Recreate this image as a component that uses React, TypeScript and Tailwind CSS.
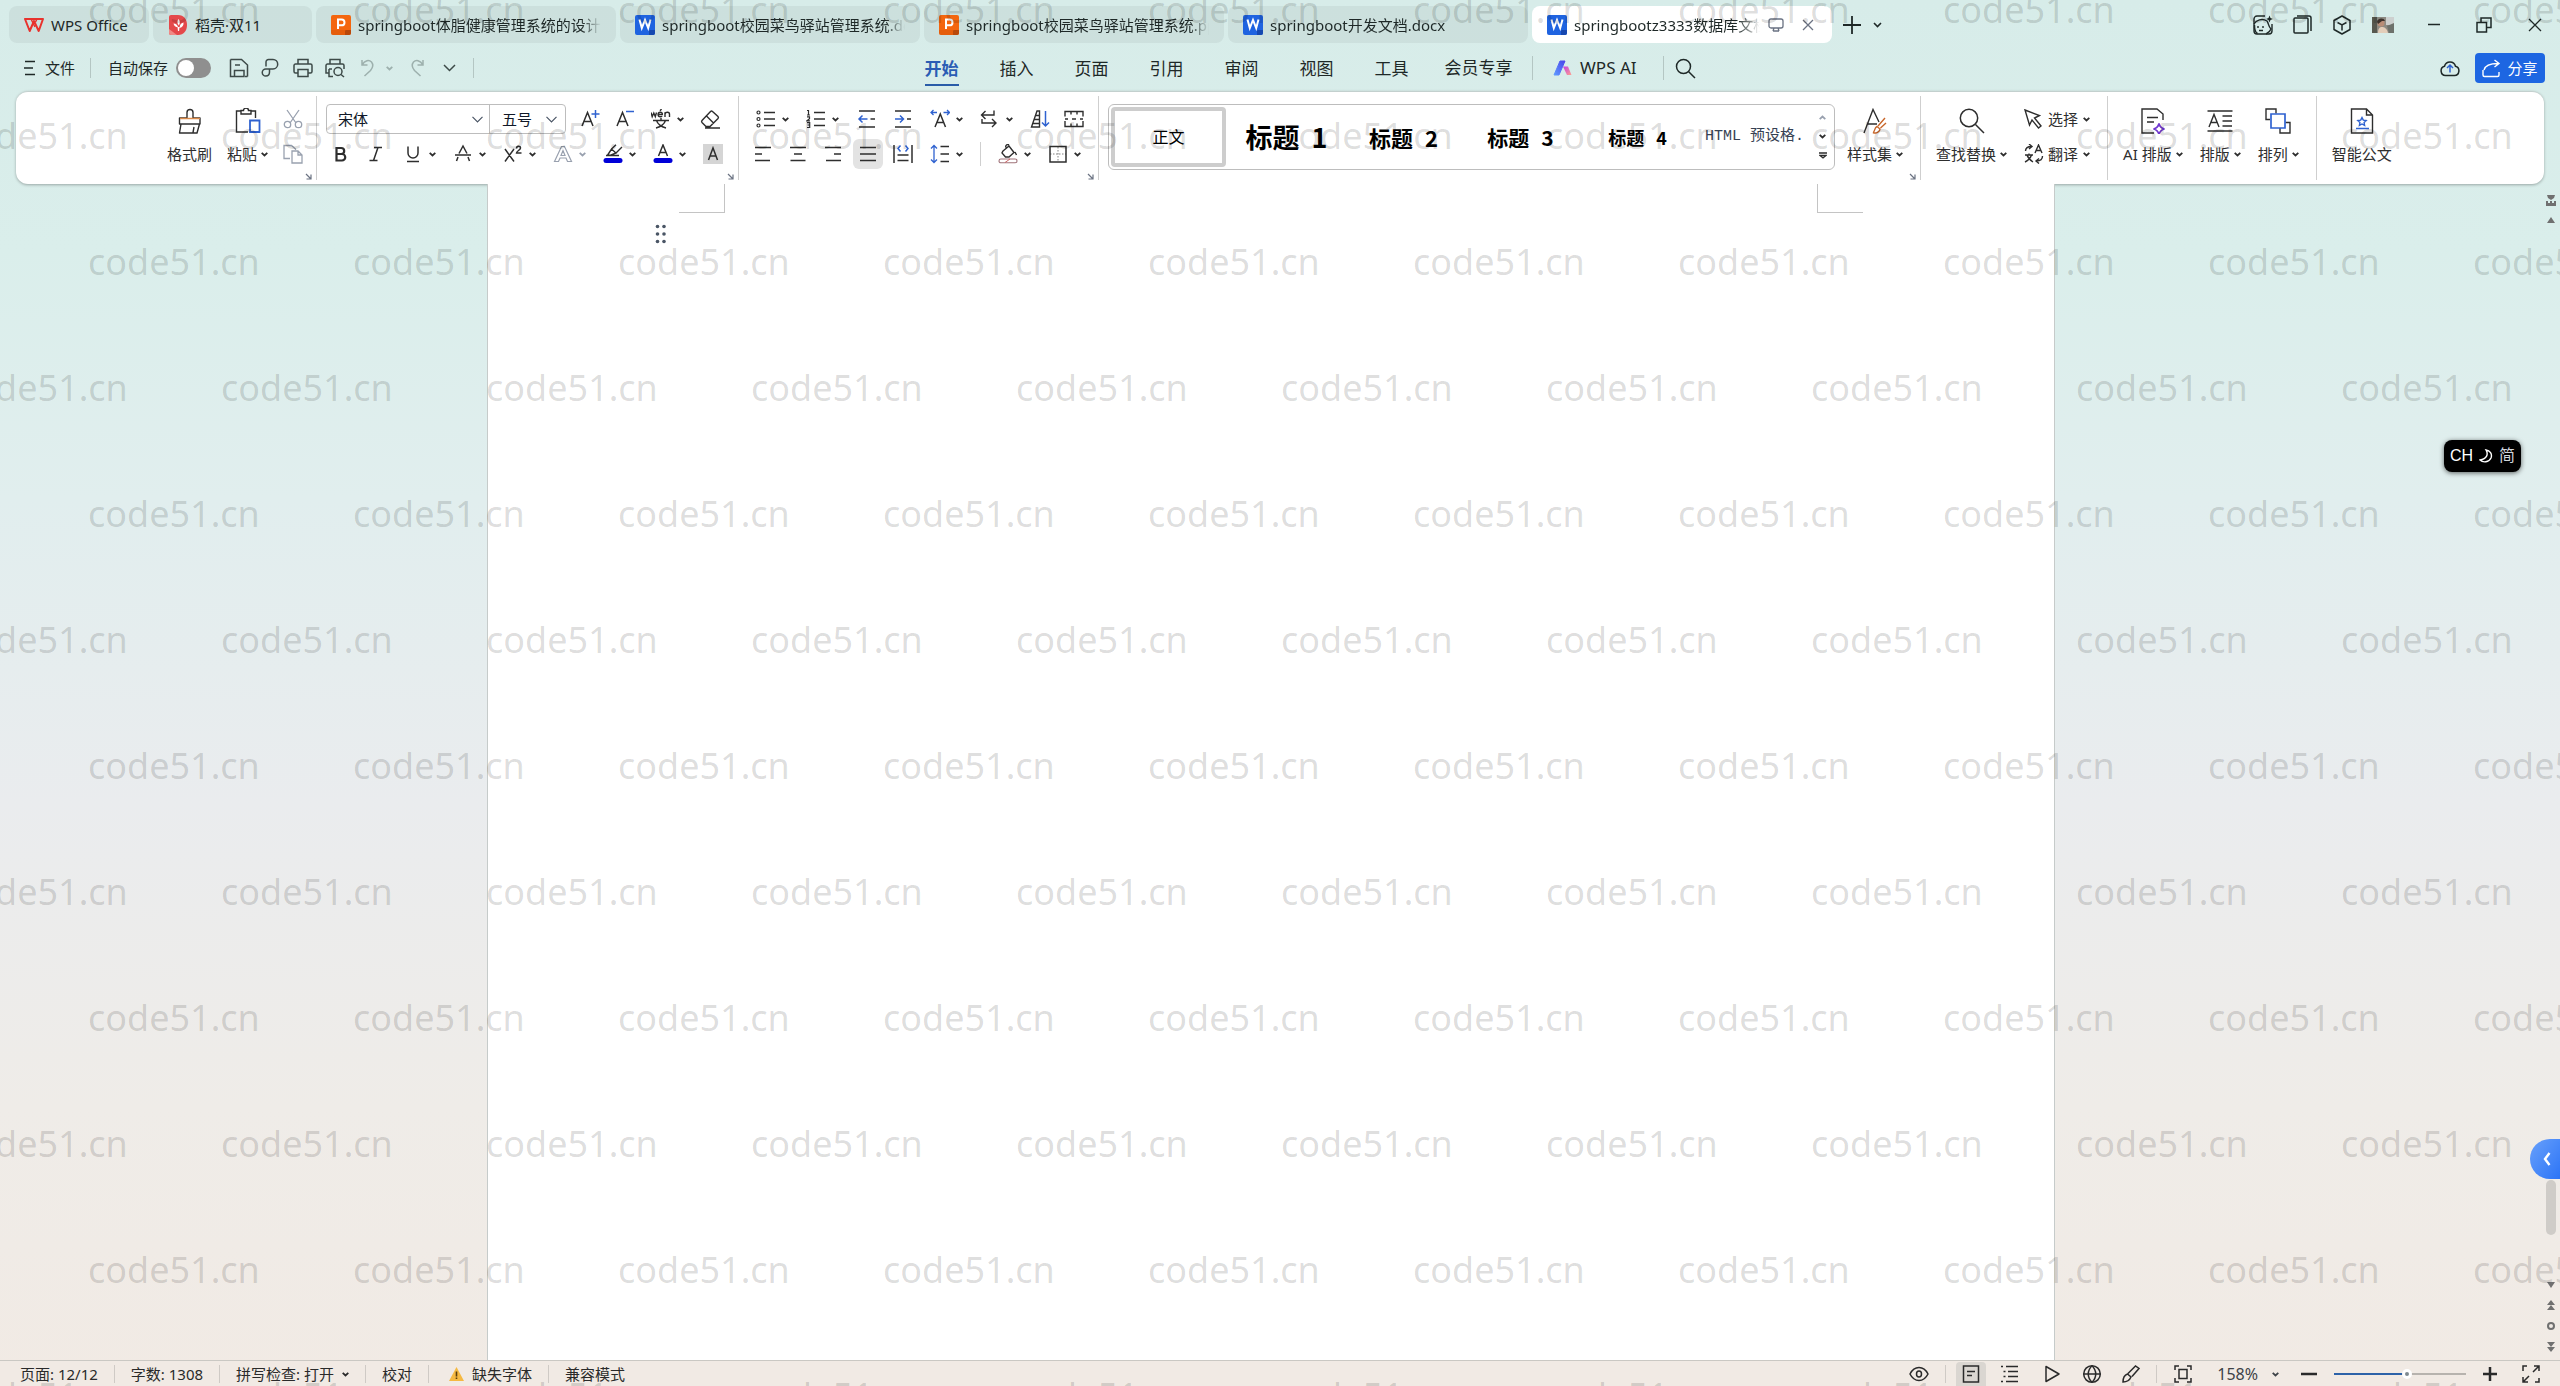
import { useState, type ReactNode } from 'react'

type IcoProps = { w?: number; h?: number; sw?: number; className?: string; children: ReactNode }

function Ico({ w = 20, h, sw = 1.5, className = '', children }: IcoProps) {
  const height = h ?? w
  return (
    <svg
      width={w}
      height={height}
      viewBox={`0 0 ${w} ${height}`}
      fill="none"
      stroke="currentColor"
      strokeWidth={sw}
      className={`shrink-0 ${className}`}
      aria-hidden="true"
    >
      {children}
    </svg>
  )
}

const BLUE = '#2f62d0'

function Chev({ className = '' }: { className?: string }) {
  return (
    <Ico w={7} h={5} sw={1.8} className={className}>
      <path d="M.7 .9l2.8 2.6L6.3 .9" />
    </Ico>
  )
}

function BigChev() {
  return (
    <Ico w={13} h={8} sw={1.5}>
      <path d="M1 1l5.5 5.5L12 1" />
    </Ico>
  )
}

function WordIcon() {
  return (
    <svg width="20" height="20" viewBox="0 0 20 20" className="shrink-0" aria-hidden="true">
      <rect width="20" height="20" rx="2" fill="#1f63e0" />
      <path d="M14 20v-4a1 1 0 011-1h5v3a2 2 0 01-2 2z" fill="#1648b0" />
      <path d="M4.5 4.5l2.3 8.5L10 5l3.2 8 2.3-8.5" fill="none" stroke="#fff" strokeWidth="2" />
    </svg>
  )
}

function SlidesIcon() {
  return (
    <svg width="20" height="20" viewBox="0 0 20 20" className="shrink-0" aria-hidden="true">
      <rect width="20" height="20" rx="2" fill="#f4660f" />
      <path d="M0 18v-3h14v5H2a2 2 0 01-2-2z" fill="#c94c05" opacity=".35" />
      <path d="M14 20v-4a1 1 0 011-1h5v3a2 2 0 01-2 2z" fill="#b8480a" />
      <path d="M7 14V4.5h3.6a2.9 2.9 0 010 5.8H7" fill="none" stroke="#fff" strokeWidth="2" />
    </svg>
  )
}

function WpsIcon() {
  return (
    <Ico w={20} sw={2} className="text-[#e8322d]">
      <path d="M1 4h18l-4.300 12L10 6 5.700 16z" strokeLinejoin="round" />
      <path d="M7 4l4 8M13 4l-1.500 3" strokeWidth="1.500" />
    </Ico>
  )
}

function DocerIcon() {
  return (
    <svg width="18" height="20" viewBox="0 0 18 20" className="shrink-0" aria-hidden="true">
      <path d="M0 2a2 2 0 012-2h7c6 0 9 4.500 9 10s-3 10-9 10H2a2 2 0 01-2-2z" fill="#e4484a" />
      <path d="M0 14l8 6H2a2 2 0 01-2-2z" fill="#f08a86" />
      <path d="M9.500 4c1.600 2 1.800 4 .4 6.500C8 8.500 8 6 9.500 4zM4.500 8.500c2.500 0 4 1.300 4.600 3.800-2.600-.2-4.200-1.400-4.600-3.800zM14.500 7.500c.3 2.800-1 4.800-3.800 5.500-.2-2.800 1-4.700 3.800-5.500zM8.500 12l2 0-.4 4H9z" fill="#fff" />
    </svg>
  )
}

const docTabs = [
  { name: 'springboot体脂健康管理系统的设计', kind: 'p' },
  { name: 'springboot校园菜鸟驿站管理系统.docx', kind: 'w' },
  { name: 'springboot校园菜鸟驿站管理系统.pptx', kind: 'p' },
  { name: 'springboot开发文档.docx', kind: 'w' },
]

const menus = ['开始', '插入', '页面', '引用', '审阅', '视图', '工具']

function TabBar() {
  return (
    <header className="flex h-[43px] items-end pl-[9px] pr-[18px]">
      <div className="flex min-w-0 gap-1">
        <button className="flex h-[37px] w-[140px] items-center gap-[7px] rounded-lg bg-black/5 pl-[15px]">
          <WpsIcon />
          WPS Office
        </button>
        <button className="flex h-[37px] w-[159px] items-center gap-2 rounded-lg bg-black/5 pl-4">
          <DocerIcon />
          稻壳·双11
        </button>
        {docTabs.map((tab) => (
          <button key={tab.name} className="flex h-[37px] w-[300px] min-w-0 items-center gap-[7px] rounded-lg bg-black/5 px-[15px]">
            {tab.kind === 'p' ? <SlidesIcon /> : <WordIcon />}
            <span className="flex-1 overflow-hidden whitespace-nowrap text-left [mask-image:linear-gradient(to_right,black_92%,transparent)]">
              {tab.name}
            </span>
          </button>
        ))}
        <div className="flex h-[37px] w-[300px] min-w-0 items-center rounded-lg bg-white pl-[15px] pr-[18px]">
          <button className="flex min-w-0 flex-1 items-center gap-[7px]">
            <WordIcon />
            <span className="flex-1 overflow-hidden whitespace-nowrap text-left [mask-image:linear-gradient(to_right,black_88%,transparent)]">
              springbootz3333数据库文档
            </span>
          </button>
          <Ico w={16} h={14} className="ml-2 text-gray-500" sw={1.3}>
            <path d="M3 1h10a2 2 0 012 2v5a2 2 0 01-2 2H3a2 2 0 01-2-2V3a2 2 0 012-2zM5 13h6M6 10l-1 3M10 10l1 3" />
          </Ico>
          <button aria-label="关闭标签" className="ml-[18px] text-gray-500">
            <Ico w={12} sw={1.3}>
              <path d="M1 1l10 10M11 1L1 11" />
            </Ico>
          </button>
        </div>
      </div>
      <div className="flex h-[37px] items-center gap-3 pl-[11px]">
        <button aria-label="新建">
          <Ico w={18} sw={1.8}>
            <path d="M9 0v18M0 9h18" />
          </Ico>
        </button>
        <button aria-label="标签列表">
          <Ico w={9} h={6} sw={1.6}>
            <path d="M1 1l3.500 3.500L8 1" />
          </Ico>
        </button>
      </div>
      <div className="ml-auto flex h-[37px] items-center">
        <button aria-label="助手">
          <Ico w={20} sw={1.4}>
            <path d="M12 1H4a3 3 0 00-3 3v12a3 3 0 003 3h12a3 3 0 003-3V9" />
            <path d="M1 9c2-4 8-6 13-3 2 3 1 5 4 8-1 3-3 4-5 5M1.500 10c0 4 0 7 3 8.500" />
            <path d="M5 11v2M10 11v2M6 15.500h4" />
            <path d="M16.500 .5l1 2.500 2.500 1-2.500 1-1 2.500-1-2.500-2.500-1 2.500-1z" fill="currentColor" stroke="none" />
          </Ico>
        </button>
        <button aria-label="窗口" className="ml-5">
          <Ico w={19}>
            <rect x="1" y="3" width="14" height="15" rx="1" />
            <path d="M4 1h12a2 2 0 012 2v13" />
          </Ico>
        </button>
        <button aria-label="应用" className="ml-5">
          <Ico w={20}>
            <path d="M10 1l8 4.500v9L10 19l-8-4.500v-9z" strokeLinejoin="round" />
            <path d="M5.500 7.500L10 10l4.500-2.500M10 10v5.500" />
          </Ico>
        </button>
        <button aria-label="账号" className="ml-5">
          <svg width="22" height="16" viewBox="0 0 22 16" aria-hidden="true">
            <rect width="22" height="16" fill="#8d8a82" />
            <rect x="14" width="8" height="8" fill="#cdd0cf" />
            <rect width="5" height="16" fill="#57584f" />
            <path d="M6 16c0-5 2-6 4-6s5 1 6 6z" fill="#e3cdb9" />
            <circle cx="9" cy="6" r="3.500" fill="#b98d77" />
            <path d="M5 5c0-4 7-5 8-1l-3 0-4 3z" fill="#3d322c" />
            <path d="M15 9l7-3v10h-5z" fill="#6d716b" />
          </svg>
        </button>
        <button aria-label="最小化" className="ml-[34px]">
          <Ico w={12}>
            <path d="M0 5.500h12" />
          </Ico>
        </button>
        <button aria-label="还原" className="ml-9">
          <Ico w={16}>
            <path d="M1 5.500h9.500V15H1zM5 5V1h10v9.500h-4" />
          </Ico>
        </button>
        <button aria-label="关闭" className="ml-9">
          <Ico w={14} sw={1.3}>
            <path d="M1 1l12 12M13 1L1 13" />
          </Ico>
        </button>
      </div>
    </header>
  )
}

function MenuBar() {
  const [active, setActive] = useState('开始')

  return (
    <div className="flex h-12 items-center pl-6 pr-[15px] pt-0.5">
      <button className="flex items-center gap-[9px]">
        <Ico w={12} h={16} sw={1.3}>
          <path d="M1 1.500h10M0 8h9M1 14.500h10" />
        </Ico>
        文件
      </button>
      <span className="ml-[15px] h-5 w-px bg-[#b4c6c3]" />
      <label className="ml-[17px] flex items-center gap-2">
        自动保存
        <input type="checkbox" className="peer sr-only" />
        <span className="flex h-5 w-[35px] items-center rounded-full bg-[#8f8f8f] p-0.5 peer-checked:justify-end">
          <span className="size-4 rounded-full bg-white" />
        </span>
      </label>
      <div className="ml-[18px] flex items-center gap-3 text-[#3d4a48]">
        <button aria-label="保存">
          <Ico>
            <path d="M1.500 1.500h11l6 5.500v11.500M18.500 18.500H16M5 18.500H1.500v-17M6 7h5M5.500 18.500v-6h9.500v6z" />
          </Ico>
        </button>
        <button aria-label="输出PDF">
          <Ico>
            <path d="M5 8.500V4a2.500 2.500 0 012.500-2.500H12a4.700 4.700 0 010 9.400H4.800a3.500 3.500 0 000 7.100c2.400 0 3.700-1.500 3.700-4V10.900" />
          </Ico>
        </button>
        <button aria-label="打印">
          <Ico>
            <path d="M5 6V1.500h10V6M5 15H2.500A1.500 1.500 0 011 13.500v-6A1.500 1.500 0 012.500 6h15A1.500 1.500 0 0119 7.500v6a1.500 1.500 0 01-1.500 1.500H15M5 11.500h10v7H5z" />
          </Ico>
        </button>
        <button aria-label="打印预览">
          <Ico>
            <path d="M5 6V1.500h10V6M4 15H1V7.500A1.500 1.500 0 012.500 6h15A1.500 1.500 0 0119 7.500V11M4 11v7.500h4M4 11h3" />
            <circle cx="13" cy="13.500" r="4" />
            <path d="M16 16.500l3 2.500" />
          </Ico>
        </button>
        <div className="flex items-center gap-[7px] pl-0.5 text-[#9db0ad]">
          <button aria-label="撤销">
            <Ico>
              <path d="M3 2v5h5.500M3 7c3-5 7-5.500 9.500-3 2.500 3 1 6-1 8.500L5.500 18" />
            </Ico>
          </button>
          <Chev />
        </div>
        <button aria-label="恢复" className="pl-0.5 text-[#9db0ad]">
          <Ico>
            <path d="M16 2v5h-5.500M16 7C13 2 9 1.500 6.500 4 4 7 5.500 10 7.500 12.500l6 5.500" />
          </Ico>
        </button>
        <button aria-label="更多" className="pl-1">
          <BigChev />
        </button>
      </div>
      <span className="ml-[17px] h-5 w-px bg-[#b4c6c3]" />
      <nav className="ml-[430px] flex text-[17px]">
        {menus.map((m) => (
          <button key={m} onClick={() => setActive(m)} className="flex w-[75px] justify-center">
            <span
              className={
                m === active
                  ? 'border-b-2 border-[#2a5ca8] pt-0.5 font-bold leading-[31px] text-[#2a5cb4]'
                  : 'pt-0.5 leading-[31px]'
              }
            >
              {m}
            </span>
          </button>
        ))}
        <button className="w-[99px]">会员专享</button>
      </nav>
      <span className="ml-1 h-6 w-px bg-[#b4c6c3]" />
      <button className="ml-5 flex items-center gap-2 text-[17px]">
        <svg width="19" height="16" viewBox="0 0 19 16" aria-hidden="true">
          <defs>
            <linearGradient id="aiBlue" x1="0" y1="1" x2="1" y2="0">
              <stop offset="0" stopColor="#5f9bff" />
              <stop offset="1" stopColor="#4a43ea" />
            </linearGradient>
            <linearGradient id="aiPink" x1="0" y1="0" x2="1" y2="1">
              <stop offset="0" stopColor="#c63fe0" />
              <stop offset="1" stopColor="#ffa18f" />
            </linearGradient>
          </defs>
          <path d="M7 1h5L6 15H1z" fill="url(#aiBlue)" stroke="url(#aiBlue)" strokeLinejoin="round" />
          <path d="M10 6.500h5L18.500 15H14z" fill="url(#aiPink)" />
        </svg>
        WPS AI
      </button>
      <span className="ml-[26px] h-6 w-px bg-[#b4c6c3]" />
      <button aria-label="搜索" className="ml-[11px]">
        <Ico w={21}>
          <circle cx="8.500" cy="8.500" r="7" />
          <path d="M13.500 13.500l6.500 6.500" />
        </Ico>
      </button>
      <button aria-label="上传" className="ml-auto">
        <Ico w={20} h={18}>
          <path d="M5.500 16.500a4.700 4.700 0 01-1-9.200 5.700 5.700 0 0111 0 4.700 4.700 0 01-1 9.200z" />
          <path d="M10 13.500v-7M7 9l3-3 3 3" stroke={BLUE} />
        </Ico>
      </button>
      <button className="ml-[15px] flex h-[30px] w-[70px] items-center justify-center gap-[6px] rounded bg-[#1d66e2] text-white">
        <Ico w={19} sw={1.4}>
          <path d="M1 11v5a1.500 1.500 0 001.500 1.500h13A1.500 1.500 0 0017 16v-3M2 11c1-4 5-6.500 14-6.500M12.500 1L17 4.500 12.500 8" />
        </Ico>
        分享
      </button>
    </div>
  )
}

function Tool({ label, chev, active, dim, children }: { label: string; chev?: boolean; active?: boolean; dim?: boolean; children: ReactNode }) {
  return (
    <button aria-label={label} className={`flex h-[30px] items-center gap-[6px] ${dim ? 'text-gray-400' : ''}`}>
      {active ? <span className="-mx-[5px] rounded-md bg-[#e3e3e3] p-[5px]">{children}</span> : children}
      {chev && <Chev />}
    </button>
  )
}

function BigTool({ label, chev, children }: { label: string; chev?: boolean; children: ReactNode }) {
  return (
    <button className="flex h-[60px] flex-col items-center justify-between pt-1">
      {children}
      <span className="flex items-center gap-1 whitespace-nowrap leading-5">
        {label}
        {chev && <Chev />}
      </span>
    </button>
  )
}

function Group({ className = '', launcher, children }: { className?: string; launcher?: boolean; children: ReactNode }) {
  return (
    <div className={`relative my-1 flex shrink-0 border-r border-[#cfcfcf] pt-2 ${className}`}>
      {children}
      {launcher && (
        <button aria-label="更多设置" className="absolute bottom-0 right-1 text-gray-500">
          <Ico w={7} sw={1.2}>
            <path d="M1 1l5 5M6 1.500V6H1.500" />
          </Ico>
        </button>
      )}
    </div>
  )
}

function ClipboardGroup() {
  return (
    <Group launcher className="gap-[15px] pl-[151px] pr-[13px]">
      <BigTool label="格式刷">
        <Ico w={26} sw={1.4}>
          <path d="M10 10V4.500a3 3 0 016 0V10h7v6H2.500v-6zM4 16L2.500 25H20l2.500-9M17 19l-1 5.500" strokeLinejoin="round" />
          <path d="M3 10.500h20" stroke="#d98a4b" />
        </Ico>
      </BigTool>
      <BigTool label="粘贴" chev>
        <Ico w={26} sw={1.4}>
          <path d="M6 3H1.500v21H13M16 3h4.500v7M6 6V2.500h2.500a2.500 2.500 0 015 0H16V6z" />
          <path d="M15 12.500h9.500V24H15z" stroke={BLUE} strokeWidth="1.800" />
        </Ico>
      </BigTool>
      <div className="flex flex-col gap-[5px] text-gray-400">
        <Tool label="剪切">
          <Ico sw={1.3}>
            <path d="M4 1l9 13M16 1L7 14" />
            <circle cx="4.500" cy="15.500" r="3.200" />
            <circle cx="15.500" cy="15.500" r="3.200" />
          </Ico>
        </Tool>
        <Tool label="复制">
          <Ico sw={1.3}>
            <path d="M7 14.500H1v-13h7.500l4 3.500v1M9 7h6l4 4v8H9zM15 7v4h4" />
          </Ico>
        </Tool>
      </div>
    </Group>
  )
}

function FontGroup() {
  return (
    <Group launcher className="w-[422px] flex-col gap-[5px] pl-[9px]">
      <div className="flex h-[30px] items-center gap-[15px]">
        <div className="flex h-[30px] w-[240px] rounded border border-[#bdbdbd] text-gray-600">
          <div className="flex w-[163px] items-center border-r border-[#bdbdbd] pr-1.5">
            <select aria-label="字体" className="h-full min-w-0 flex-1 appearance-none bg-transparent pl-[11px] text-gray-900 outline-none">
              <option>宋体</option>
              <option>黑体</option>
            </select>
            <Ico w={11} h={7} sw={1.2}>
              <path d="M.5 .8l5 5 5-5" />
            </Ico>
          </div>
          <div className="flex flex-1 items-center pr-2">
            <select aria-label="字号" className="h-full min-w-0 flex-1 appearance-none bg-transparent pl-3 text-gray-900 outline-none">
              <option>五号</option>
              <option>四号</option>
            </select>
            <Ico w={11} h={7} sw={1.2}>
              <path d="M.5 .8l5 5 5-5" />
            </Ico>
          </div>
        </div>
        <Tool label="增大字号">
          <Ico>
            <path d="M1 17L6.500 3.500 12 17M3 12.500h7" />
            <path d="M14.500 1v8M10.500 5h8" stroke={BLUE} />
          </Ico>
        </Tool>
        <Tool label="减小字号">
          <Ico>
            <path d="M1 17L6.500 3.500 12 17M3 12.500h7" />
            <path d="M10 2.500h8" stroke={BLUE} />
          </Ico>
        </Tool>
        <Tool label="拼音指南" chev>
          <Ico sw={1.4}>
            <path d="M0 3.500l1.200 4.200L2.800 4l1.500 3.700 1.200-4.200M7 5.500h4.300C11.500 4 10.500 3.300 9.300 3.300c-3 0-3 4.500 0 4.500.8 0 1.400-.2 1.900-.6M9 1.800L10.500 0M14 8V3.300M14 5c.5-2.300 4.500-2.300 4.500.3V8" />
            <path d="M2 11.500h16M10 9v2.500M5.500 11.500c1 3 4 6 9.500 7.500M14.500 11.500c-1 3-4 6-9.500 7.500" />
          </Ico>
        </Tool>
        <Tool label="清除格式">
          <Ico w={22} h={20} sw={1.4}>
            <path d="M3 11.500l8.500-9a1.500 1.500 0 012 0l5.500 5a1.500 1.500 0 010 2L11 17.500H7L3 13.500a1.500 1.500 0 010-2zM7.500 7l7 7M6 19h15" />
          </Ico>
        </Tool>
      </div>
      <div className="flex items-center gap-[17px] pl-[3px]">
        <Tool label="加粗">
          <Ico sw={2.2}>
            <path d="M7.500 4h4.700a3 3 0 010 6H7.500zM7.500 10H13a3.200 3.200 0 010 6.500H7.500z" />
          </Ico>
        </Tool>
        <Tool label="倾斜">
          <Ico>
            <path d="M8 3.500h8M3.500 16.500h8M12 3.500l-4.500 13" />
          </Ico>
        </Tool>
        <Tool label="下划线" chev>
          <Ico>
            <path d="M5 2.500v6.500a5 5 0 0010 0V2.500M4 17.500h12" />
          </Ico>
        </Tool>
        <Tool label="删除线" chev>
          <Ico>
            <path d="M6 9.500l4-7.500 4 7.500M2 11h16M5 13l-1.500 4M15 13l1.500 4" />
          </Ico>
        </Tool>
        <Tool label="上标" chev>
          <Ico>
            <path d="M2 5l9 12.500M11 5L2 17.500M13.500 4.500c0-3 4-3 4-.5 0 2-4 3-4 5h5" />
          </Ico>
        </Tool>
        <Tool label="文字效果" chev dim>
          <Ico sw={1.2}>
            <path d="M1.500 17.500L8.500 2.500h3l7 15h-4l-1.500-3.500H7l-1.500 3.500zM8 11.500h4L10 6.500z" />
          </Ico>
        </Tool>
        <Tool label="突出显示" chev>
          <Ico>
            <path d="M3 11.500h13M5 10.500L8.500 5l4.500 4-6 2.500zM8.500 5L13 .8M13 9l6-6" strokeWidth="1.400" />
            <rect x=".5" y="14" width="19" height="5" rx="2.500" fill="#0000d8" stroke="none" />
          </Ico>
        </Tool>
        <Tool label="字体颜色" chev>
          <Ico>
            <path d="M5.500 12L10 1l4.500 11M7 8.500h6" />
            <rect x=".5" y="14" width="19" height="5" rx="2.500" fill="#0000d8" stroke="none" />
          </Ico>
        </Tool>
        <Tool label="字符底纹">
          <Ico>
            <rect width="20" height="20" fill="#d5d5d5" stroke="none" />
            <path d="M5.500 16L10 4l4.500 12M7 12h6" />
          </Ico>
        </Tool>
      </div>
    </Group>
  )
}

function ParagraphGroup() {
  return (
    <Group launcher className="w-[360px] flex-col gap-[5px] pl-[14px]">
      <div className="flex items-center gap-[17px] pl-[3px]">
        <Tool label="项目符号" chev>
          <Ico>
            <path d="M8 3.500h11M8 10h11M8 16.500h11" />
            <circle cx="2.500" cy="3.500" r="1.500" strokeWidth="1.200" />
            <circle cx="2.500" cy="10" r="1.500" strokeWidth="1.200" />
            <circle cx="2.500" cy="16.500" r="1.500" strokeWidth="1.200" />
          </Ico>
        </Tool>
        <Tool label="编号" chev>
          <Ico>
            <path d="M8 3.500h11M8 10h11M8 16.500h11" />
            <path d="M1 1.500h1.500V6M1 6h3M1 7.800h2.500v2L1 11.800h3M1 13.700h2.700v4.800H1M1.500 16h2" strokeWidth="1.200" />
          </Ico>
        </Tool>
        <Tool label="减少缩进">
          <Ico>
            <path d="M3 2h16M3 18h16M14.500 10H19" />
            <path d="M3 10h8.500M6.500 6.500L3 10l3.500 3.500" stroke={BLUE} />
          </Ico>
        </Tool>
        <Tool label="增加缩进">
          <Ico>
            <path d="M2 2h16M2 18h16M14 10h4" />
            <path d="M2 10h8.500M7 6.500l3.500 3.500L7 13.500" stroke={BLUE} />
          </Ico>
        </Tool>
        <Tool label="中文版式" chev>
          <Ico>
            <path d="M5 18L10.300 5 15.500 18M7 13.500h6.500" />
            <path d="M1 3.500h6M3.500 1L1 3.500 3.500 6M13.500 3.500h6M17 1l2.500 2.500L17 6" stroke={BLUE} strokeWidth="1.300" />
          </Ico>
        </Tool>
        <Tool label="换行" chev>
          <Ico>
            <path d="M14 1.500v4.500H2M5.500 2L1.500 6l4 4M2 10v4h14M12 10l4 4-4 4" strokeWidth="1.400" />
          </Ico>
        </Tool>
        <Tool label="排序">
          <Ico>
            <path d="M9.500 18V2H7L1.500 18zM5.500 6.500h4M4 10.500h5.500M2.500 14.500h7" strokeWidth="1.400" />
            <path d="M15.500 2v15M12 13.500l3.500 3.500 3.500-3.500" stroke={BLUE} />
          </Ico>
        </Tool>
        <button aria-label="显示标记" className="-ml-[3px] flex h-[30px] items-center">
          <Ico sw={1.4}>
            <path d="M1 7.500V2.500h18v5M1 12v5.500h18V12M7 2.500V5.500M13 2.500V5.500M7 17.500v-3M13 17.500v-3" />
            <path d="M1 10h3M8 10h4M16 10h3" />
          </Ico>
        </button>
      </div>
      <div className="flex items-center gap-[17px]">
        <div className="flex gap-[15px]">
          <Tool label="左对齐">
            <Ico>
              <path d="M2 3.500h16M2 10h7M2 16.500h15" />
            </Ico>
          </Tool>
          <Tool label="居中">
            <Ico>
              <path d="M2 3.500h16M6 10h8M2.500 16.500h15" />
            </Ico>
          </Tool>
          <Tool label="右对齐">
            <Ico>
              <path d="M2 3.500h16M11 10h7M3 16.500h15" />
            </Ico>
          </Tool>
          <Tool label="两端对齐" active>
            <Ico>
              <path d="M2 3.500h16M2 10h16M2 16.500h16" />
            </Ico>
          </Tool>
          <Tool label="分散对齐">
            <Ico>
              <path d="M1 1v18M19 1v18M4.500 11h11M4.500 16.500h11" />
              <path d="M7.500 1.500L5 4.500l2.500 3M12.500 1.500L15 4.500l-2.500 3" stroke={BLUE} />
            </Ico>
          </Tool>
        </div>
        <Tool label="行距" chev>
          <Ico>
            <path d="M10.500 2.500H19M10.500 10H19M10.500 17.500H19" />
            <path d="M4 2v16M1 4.500l3-3 3 3M1 15.500l3 3 3-3" stroke={BLUE} strokeWidth="1.300" />
          </Ico>
        </Tool>
        <span className="h-6 w-px bg-[#cfcfcf]" />
        <Tool label="底纹颜色" chev>
          <Ico sw={1.4}>
            <path d="M5 7l6-5 5 6.500-5 4.500H7.500L4 9zM8 3.500A2 2 0 0111 1M17 8l1.500 3" />
            <rect x="1" y="15" width="18" height="3.800" rx="1.900" stroke="#a0737a" strokeWidth="1.100" />
            <path d="M7 18.500l5-3.500" stroke="#cc6666" strokeWidth="1" />
          </Ico>
        </Tool>
        <Tool label="边框" chev>
          <Ico>
            <rect x="2" y="2.500" width="16" height="15.500" />
            <path d="M10 3v15M2 10h16" strokeWidth="1" strokeDasharray="1.500 1.500" opacity=".6" />
          </Ico>
        </Tool>
      </div>
    </Group>
  )
}

const styleCell = 'flex w-[117px] items-center justify-center whitespace-pre text-black'

function StyleName({ name, num }: { name: string; num: string }) {
  return (
    <span className="flex gap-3 font-['Noto_Sans_CJK_SC',sans-serif] font-bold leading-8">
      <span>{name}</span>
      <span>{num}</span>
    </span>
  )
}

function StylesGroup() {
  return (
    <Group launcher className="gap-3 pl-[9px] pr-[17px]">
      <div className="flex h-[66px] rounded-md border border-[#bdbdbd] p-0.5">
        <button className="mr-0.5 w-[115px] rounded border-4 border-[#cdcdcd] text-base text-black">正文</button>
        <button className={`${styleCell} text-[27px]`}>
          <StyleName name="标题" num="1" />
        </button>
        <button className={`${styleCell} text-[22px]`}>
          <StyleName name="标题" num="2" />
        </button>
        <button className={`${styleCell} text-[21px]`}>
          <StyleName name="标题" num="3" />
        </button>
        <button className={`${styleCell} text-[18px]`}>
          <StyleName name="标题" num="4" />
        </button>
        <button className={`${styleCell} font-['Liberation_Mono','Noto_Sans_CJK_SC',monospace] text-[15px] text-gray-700`}>
          HTML 预设格.
        </button>
        <div className="flex w-[19px] flex-col items-center justify-between py-2">
          <button aria-label="上一行" className="text-gray-400">
            <Chev className="rotate-180" />
          </button>
          <button aria-label="下一行">
            <Chev />
          </button>
          <button aria-label="展开样式">
            <Ico w={8} h={7} sw={1.3}>
              <path d="M0 1h8M1 3.500h6L4 6z" />
            </Ico>
          </button>
        </div>
      </div>
      <BigTool label="样式集" chev>
        <Ico w={26} sw={1.4}>
          <path d="M2 25L11 1.500 17 14M5 16h10" />
          <path d="M11 24.500c2 0 1-5 4-6l3 2.500c0 3-4 5-7 3.500zM16 18l7-8M18.500 20l5.500-5" stroke="#c8662a" />
        </Ico>
      </BigTool>
    </Group>
  )
}

function Ribbon() {
  return (
    <section className="mx-4 flex h-[93px] overflow-hidden rounded-xl border-t border-[#c3d0ce] bg-white text-[#2e2e2e] shadow-[0_1px_3px_rgba(0,0,0,0.3)]">
      <ClipboardGroup />
      <FontGroup />
      <ParagraphGroup />
      <StylesGroup />
      <Group className="gap-[17px] pl-[15px] pr-[17px]">
        <BigTool label="查找替换" chev>
          <Ico w={26}>
            <circle cx="10" cy="10" r="8.700" />
            <path d="M16.500 16.500l8.500 8.500" />
          </Ico>
        </BigTool>
        <div className="flex flex-col gap-[5px]">
          <button className="flex h-[30px] items-center gap-1">
            <Ico sw={1.4}>
              <path d="M1 1l14.500 5.500-5 2.500 6.500 8-2.500 2-6.500-8-2.500 5z" />
            </Ico>
            选择
            <Chev className="ml-px" />
          </button>
          <button className="flex h-[30px] items-center gap-1">
            <Ico sw={1.4}>
              <path d="M1.500 7c0-3 2-4.500 6-4.500M5 0l3 2.500L5 5M11 9l3.500-8L18 9M12 6.500h5M18.500 12c0 3-2 5-6 5M15 14.500L12 17l3 2.500" />
              <path d="M1 11h8M5 9.500V11M3 11c1 3 3 5 6 7M7.500 11c-1 3-3.500 5.500-6.500 7" />
            </Ico>
            翻译
            <Chev className="ml-px" />
          </button>
        </div>
      </Group>
      <Group className="gap-[17px] pl-[15px] pr-[17px]">
        <BigTool label="AI 排版" chev>
          <Ico w={26} sw={1.4}>
            <path d="M14 25H2V1h15l6 5v6M7 9.500h11M7 14h7" />
            <path d="M19 15.500c.8 3.500 2 4.700 5.500 5.500-3.500.8-4.700 2-5.500 5.500-.8-3.500-2-4.700-5.500-5.500 3.500-.8 4.700-2 5.500-5.500z" stroke="#7038d0" strokeWidth="1.700" />
          </Ico>
        </BigTool>
        <BigTool label="排版" chev>
          <Ico w={26} sw={1.4}>
            <path d="M.5 3h25M.5 23h25M15.500 8H25M15.500 13H25M15.500 18H25M2 19L7 6.500 12 19M4 14.500h6.500" />
          </Ico>
        </BigTool>
        <BigTool label="排列" chev>
          <Ico w={26} sw={1.4}>
            <path d="M5 11.500H1V1h10v4.500M20.500 14.500H25V25H15v-5" />
            <path d="M6 6h14v14H6z" stroke={BLUE} strokeWidth="1.700" />
          </Ico>
        </BigTool>
      </Group>
      <div className="flex shrink-0 pl-[15px] pt-3">
        <BigTool label="智能公文">
          <Ico w={26} sw={1.4}>
            <path d="M2.500 1h15l6 6v18h-21zM17.500 1v6h6" />
            <path d="M13 9.500l1.300 2.600 2.900.4-2.100 2 .5 2.900-2.600-1.400-2.600 1.400.5-2.900-2.100-2 2.900-.4zM7 20.500h13" stroke={BLUE} />
          </Ico>
        </BigTool>
      </div>
    </section>
  )
}

function ScrollColumn() {
  return (
    <div className="flex w-[18px] flex-col items-center pb-2 pt-[11px] text-[#707070]">
      <svg width="10" height="11" viewBox="0 0 10 11" fill="currentColor" aria-hidden="true">
        <path d="M1 0h8L8 3 5 5 2 3zM0 6h2v2h2V6h2v2h2V6h2v5H0z" />
      </svg>
      <svg width="8" height="6" viewBox="0 0 8 6" fill="currentColor" className="mt-[11px]" aria-hidden="true">
        <path d="M4 0l4 6H0z" />
      </svg>
      <span className="mb-[47px] mt-auto h-[55px] w-[10px] rounded-full bg-[#cfccc8]" />
      <div className="flex flex-col items-center gap-3">
        <svg width="8" height="6" viewBox="0 0 8 6" fill="currentColor" aria-hidden="true">
          <path d="M4 6l4-6H0z" />
        </svg>
        <svg width="8" height="10" viewBox="0 0 8 10" fill="currentColor" aria-hidden="true">
          <path d="M4 0l4 5H0zM4 5l4 5H0z" />
        </svg>
        <span className="h-2 w-2 rounded-sm border-2 border-[#707070]" />
        <svg width="8" height="10" viewBox="0 0 8 10" fill="currentColor" aria-hidden="true">
          <path d="M4 5l4-5H0zM4 10l4-5H0z" />
        </svg>
      </div>
    </div>
  )
}

function DocumentArea() {
  return (
    <main className="relative flex min-h-0 flex-1">
      <div className="flex flex-1 justify-center overflow-hidden">
        <article className="w-[1568px] border-x border-[#c6cbca] bg-white">
          <div className="flex h-[29px] justify-between px-[191px]">
            <span className="w-[46px] border-b border-r border-[#c4c4c4]" />
            <span className="w-[46px] border-b border-l border-[#c4c4c4]" />
          </div>
          <button aria-label="拖动段落" className="ml-[167px] mt-[11px] block text-gray-600">
            <svg width="12" height="20" viewBox="0 0 12 20" fill="currentColor" aria-hidden="true">
              <circle cx="2.500" cy="2.500" r="1.800" />
              <circle cx="9" cy="2.500" r="1.800" />
              <circle cx="2.500" cy="10" r="1.800" />
              <circle cx="9" cy="10" r="1.800" />
              <circle cx="2.500" cy="17.500" r="1.800" />
              <circle cx="9" cy="17.500" r="1.800" />
            </svg>
          </button>
        </article>
      </div>
      <ScrollColumn />
      <div className="absolute right-[39px] top-64 flex h-8 w-[77px] items-center justify-center gap-1.5 rounded-lg bg-black font-['Liberation_Sans','Noto_Sans_CJK_SC',sans-serif] text-base text-white shadow-[0_1px_5px_rgba(0,0,0,0.6)]">
        CH
        <Ico w={14} sw={1.4}>
          <path d="M7 1c2.500 4 1 9-6 10 3 3 9 2.500 11-2C13.500 5 11 1.500 7 1z" />
        </Ico>
        <span className="text-gray-300">简</span>
      </div>
      <button
        aria-label="展开侧栏"
        className="absolute bottom-[181px] right-0 flex h-10 w-[30px] items-center justify-center rounded-l-full bg-linear-to-br from-[#68a0fb] to-[#2c74f6] pl-1 text-white"
      >
        <Ico w={8} h={14} sw={2.4}>
          <path d="M6.500 1L2 7l4.500 6" />
        </Ico>
      </button>
    </main>
  )
}

function StatusBar() {
  const [zoom, setZoom] = useState(56)
  const sep = <span className="block h-[18px] w-px bg-[#cfcac5]" />

  return (
    <footer className="flex h-[26px] items-center border-t border-[#cac8c3] bg-[#f1eae4] px-5 pt-px text-[#2a2a2a]">
      <div className="flex items-center gap-4">
        <button>页面: 12/12</button>
        {sep}
        <button>字数: 1308</button>
        {sep}
        <button className="flex items-center gap-2">
          拼写检查: 打开 <Chev />
        </button>
        {sep}
        <button>校对</button>
        {sep}
        <button className="flex items-center gap-2 pl-1">
          <svg width="15" height="14" viewBox="0 0 15 14" aria-hidden="true">
            <path d="M7.500 0L15 14H0z" fill="#f5b942" />
            <path d="M6.700 4.500h1.600v5H6.700zM6.700 10.500h1.600V12H6.700z" fill="#5b3d0a" />
          </svg>
          缺失字体
        </button>
        {sep}
        <button>兼容模式</button>
      </div>
      <div className="ml-auto flex items-center">
        <button aria-label="护眼模式">
          <Ico>
            <path d="M1 10c2-4 5.500-6.500 9-6.500S17 6 19 10c-2 4-5.500 6.500-9 6.500S3 14 1 10z" />
            <ellipse cx="10" cy="10" rx="2.500" ry="3" />
          </Ico>
        </button>
        <span className="ml-4 mr-[10px]">{sep}</span>
        <button aria-label="页面视图" className="rounded-t bg-[#dad6d1] px-[5px] py-[2px]">
          <Ico>
            <path d="M2.500 2h15v16h-15zM6 7.500h8M6 11.500h5" />
          </Ico>
        </button>
        <button aria-label="大纲" className="ml-[14px]">
          <Ico>
            <path d="M6 2.500h12M8 7.500h10M8 12.500h10M6 17.500h12M1 2.500h2M3.500 7.500h2M3.500 12.500h2M1 17.500h2" />
          </Ico>
        </button>
        <button aria-label="阅读版式" className="ml-[22px]">
          <Ico>
            <path d="M4 2.500L17 10 4 17.500z" strokeLinejoin="round" />
          </Ico>
        </button>
        <button aria-label="Web版式" className="ml-5">
          <Ico>
            <circle cx="10" cy="10" r="8.300" />
            <path d="M1.700 10h16.600M10 1.700c-5 5-5 11.500 0 16.600M10 1.700c5 5 5 11.500 0 16.600" />
          </Ico>
        </button>
        <button aria-label="写作模式" className="ml-[18px]">
          <Ico>
            <path d="M3 18c0-4 1.500-7 4.500-8l3.500 3c-1.500 3.500-4 5-8 5zM8 9.500L15.500 2 19 4.500 12 12.500" />
          </Ico>
        </button>
        <span className="mx-4">{sep}</span>
        <button aria-label="适应窗口">
          <Ico>
            <path d="M2 6V2h4M14 2h4v4M18 14v4h-4M6 18H2v-4M6 5.500h8v9H6z" />
          </Ico>
        </button>
        <button className="ml-[24px] flex items-center gap-[14px] text-base text-[#3e4348]">
          158% <Chev />
        </button>
        <button aria-label="缩小" className="ml-[22px]">
          <Ico w={16} sw={2.500}>
            <path d="M0 8h16" />
          </Ico>
        </button>
        <input
          type="range"
          aria-label="缩放"
          min={0}
          max={100}
          value={zoom}
          onChange={(e) => setZoom(Number(e.target.value))}
          style={{ backgroundImage: `linear-gradient(to right, #2d62a8 ${zoom}%, #b7b3ae ${zoom}%)` }}
          className="mx-[17px] h-0.5 w-[132px] appearance-none [&::-webkit-slider-thumb]:size-[10px] [&::-webkit-slider-thumb]:appearance-none [&::-webkit-slider-thumb]:rounded-full [&::-webkit-slider-thumb]:border-[3px] [&::-webkit-slider-thumb]:border-white [&::-webkit-slider-thumb]:bg-[#7f8a90]"
        />
        <button aria-label="放大">
          <Ico w={14} sw={2.500}>
            <path d="M7 0v14M0 7h14" />
          </Ico>
        </button>
        <button aria-label="全屏" className="ml-[25px]">
          <Ico w={18}>
            <path d="M1 6V1h4M12 1h5v5M17 13v4h-4M6 17H1v-5M17 1l-6 6M1 17l6-6" />
          </Ico>
        </button>
      </div>
    </footer>
  )
}

function Watermark() {
  return (
    <div className="pointer-events-none absolute inset-0 z-50 overflow-hidden pt-px text-4xl text-black/14" aria-hidden="true">
      {Array.from({ length: 11 }, (_, row) => (
        <div key={row} className={row % 2 ? 'flex h-[126px] -translate-x-[44px]' : 'flex h-[126px] translate-x-[88px]'}>
          {Array.from({ length: 10 }, (_, col) => (
            <span key={col} className="w-[265px] shrink-0 leading-[18px]">
              code51.cn
            </span>
          ))}
        </div>
      ))}
      <div className="flex -translate-x-[44px]">
        {Array.from({ length: 10 }, (_, col) => (
          <span key={col} className="w-[265px] shrink-0 leading-[18px]">
            code51.cn
          </span>
        ))}
      </div>
    </div>
  )
}

export default function App() {
  return (
    <div className="relative flex h-screen flex-col overflow-hidden bg-[linear-gradient(180deg,#d7ece9_0%,#daeeeb_18%,#e1eeee_36%,#eaecee_58%,#efece8_80%,#f1eae4_100%)] font-['Noto_Sans','Noto_Sans_CJK_SC',sans-serif] text-[15px] leading-5 text-[#1e2827]">
      <TabBar />
      <MenuBar />
      <Ribbon />
      <DocumentArea />
      <StatusBar />
      <Watermark />
    </div>
  )
}
